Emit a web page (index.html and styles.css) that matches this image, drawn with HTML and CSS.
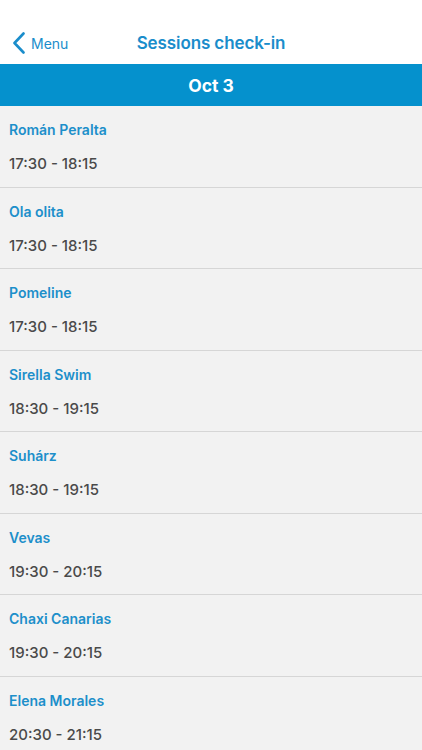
FILE: index.html
```html
<!DOCTYPE html>
<html>
<head>
<meta charset="utf-8">
<link rel="stylesheet" href="styles.css">
</head>
<body>
<div class="app">
  <header class="nav">
    <a class="back">
      <svg class="chev" width="14" height="22" viewBox="0 0 14 22"><path d="M11.5 1.5 L2.5 11 L11.5 20.5" fill="none" stroke="#1a8dcb" stroke-width="2.6" stroke-linecap="round" stroke-linejoin="round"/></svg>
      <span>Menu</span>
    </a>
    <div class="title">Sessions check-in</div>
  </header>
  <div class="datebar">Oct 3</div>
  <ul class="list">
    <li class="row"><div class="name">Román Peralta</div><div class="time">17:30 - 18:15</div></li>
    <li class="row"><div class="name">Ola olita</div><div class="time">17:30 - 18:15</div></li>
    <li class="row"><div class="name">Pomeline</div><div class="time">17:30 - 18:15</div></li>
    <li class="row"><div class="name">Sirella Swim</div><div class="time">18:30 - 19:15</div></li>
    <li class="row"><div class="name">Suhárz</div><div class="time">18:30 - 19:15</div></li>
    <li class="row"><div class="name">Vevas</div><div class="time">19:30 - 20:15</div></li>
    <li class="row"><div class="name">Chaxi Canarias</div><div class="time">19:30 - 20:15</div></li>
    <li class="row"><div class="name">Elena Morales</div><div class="time">20:30 - 21:15</div></li>
  </ul>
</div>
</body>
</html>
```
FILE: styles.css
```css
html, body {
  margin: 0;
  padding: 0;
  background: #f2f2f2;
  font-family: Inter, "Liberation Sans", sans-serif;
}
.app {
  width: 422px;
  height: 750px;
  overflow: hidden;
  background: #f2f2f2;
}
.nav {
  height: 64px;
  background: #ffffff;
  position: relative;
  display: flex;
  align-items: center;
  justify-content: center;
  padding-top: 22px;
  box-sizing: border-box;
}
.back {
  position: absolute;
  left: 12px;
  top: 32px;
  display: flex;
  align-items: center;
  gap: 5px;
  color: #1a8dcb;
  font-size: 14px;
}
.back span {
  margin-top: 0;
}
.title {
  color: #1a8dcb;
  font-size: 17px;
  font-weight: 600;
  margin-top: 0;
  letter-spacing: -0.1px;
}
.datebar {
  height: 42px;
  background: #0591cd;
  color: #ffffff;
  font-size: 17.5px;
  font-weight: 700;
  display: flex;
  align-items: center;
  justify-content: center;
}
.list {
  list-style: none;
  margin: 0;
  padding: 0;
}
.row {
  height: 81.5px;
  box-sizing: border-box;
  border-bottom: 1.5px solid #d6d6d6;
  padding: 15px 9px 0;
}
.name {
  color: #1d8fca;
  font-size: 14px;
  font-weight: 600;
  line-height: 17px;
}
.time {
  color: #4a4a4a;
  font-size: 15px;
  font-weight: 500;
  line-height: 18px;
  margin-top: 17px;
}
```
